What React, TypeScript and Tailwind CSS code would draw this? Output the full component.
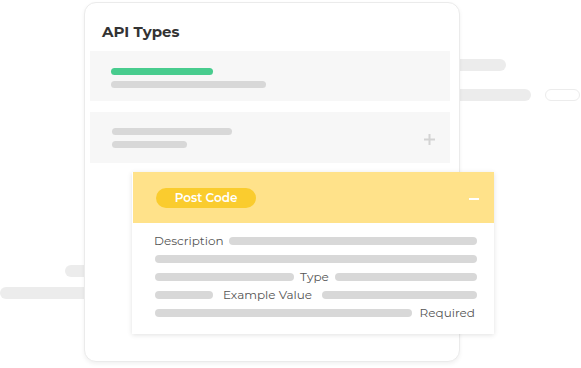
import React from "react";

const font = { fontFamily: "Montserrat, 'Noto Sans', 'Open Sans', sans-serif" };

const Bar = ({ w }: { w?: string }) => (
  <div className={`h-[8px] rounded-full bg-[#d8d8d8] ${w ?? "flex-1"}`} />
);

const App = () => {
  return (
    <div className="relative w-[581px] h-[368px] bg-white overflow-hidden" style={font}>
      {/* background streaks */}
      <div className="absolute left-[420px] top-[59px] w-[86px] h-[12px] rounded-full bg-[#ececec]" />
      <div className="absolute left-[420px] top-[89px] w-[111px] h-[12px] rounded-full bg-[#ececec]" />
      <div className="absolute left-[545px] top-[89px] w-[35px] h-[12px] rounded-full border border-[#ececec] bg-white" />
      <div className="absolute left-[65px] top-[265px] w-[40px] h-[12px] rounded-full bg-[#ececec]" />
      <div className="absolute left-0 top-[287px] w-[100px] h-[12px] rounded-full bg-[#ececec]" />

      <div className="relative ml-[84px] mt-[2px] w-[376px] h-[360px] rounded-[12px] border border-[#ebebeb] bg-white shadow-[0_2px_4px_rgba(0,0,0,0.06)]">
        <h2 className="pl-[17px] pt-[19px] text-[15px] font-bold leading-[20px] text-[#333]">API Types</h2>

        <div className="ml-[5px] mt-[9px] w-[360px] h-[50px] bg-[#f7f7f7] pl-[21px] pt-[17px] flex flex-col gap-[6px]">
          <div className="h-[7px] w-[102px] rounded-full bg-[#48cc8e]" />
          <div className="h-[7px] w-[155px] rounded-full bg-[#d8d8d8]" />
        </div>

        <div className="ml-[5px] mt-[11px] w-[360px] h-[51px] bg-[#f7f7f7] pl-[22px] pr-[15px] flex items-center justify-between">
          <div className="flex flex-col gap-[6px]">
            <div className="h-[7px] w-[120px] rounded-full bg-[#d8d8d8]" />
            <div className="h-[7px] w-[75px] rounded-full bg-[#d8d8d8]" />
          </div>
          <svg width="11" height="11" viewBox="0 0 11 11" className="mt-[4px]">
            <path d="M5.5 0v11M0 5.5h11" stroke="#d3d3d3" strokeWidth="2" />
          </svg>
        </div>

        <div className="ml-[47px] mt-[9px] w-[362px] shadow-[0_1px_5px_rgba(0,0,0,0.12)]">
          <div className="ml-[1px] h-[51px] bg-[#ffe28a] flex items-center justify-between pl-[23px] pr-[15px]">
            <span className="h-[20px] w-[100px] rounded-full bg-[#facc2e] flex items-center justify-center text-[12px] font-semibold text-white">
              Post Code
            </span>
            <span className="h-[2px] w-[10px] bg-white mt-[3px]" />
          </div>
          <div className="bg-white pl-[22px] pr-[17px] pt-[10px] pb-[13px] flex flex-col gap-[2px] text-[12px] leading-[16px] text-[#555]">
            <div className="flex items-center gap-[5px]">
              <span>Description</span>
              <Bar />
            </div>
            <div className="flex items-center h-[16px] pl-[1px]">
              <Bar />
            </div>
            <div className="flex items-center gap-[6px] pl-[1px]">
              <Bar w="w-[139px]" />
              <span>Type</span>
              <Bar />
            </div>
            <div className="flex items-center gap-[10px] pl-[1px]">
              <Bar w="w-[58px]" />
              <span>Example Value</span>
              <Bar />
            </div>
            <div className="flex items-center gap-[8px] pl-[1px]">
              <Bar />
              <span className="pr-[2px]">Required</span>
            </div>
          </div>
        </div>
      </div>
    </div>
  );
};

export default App;
